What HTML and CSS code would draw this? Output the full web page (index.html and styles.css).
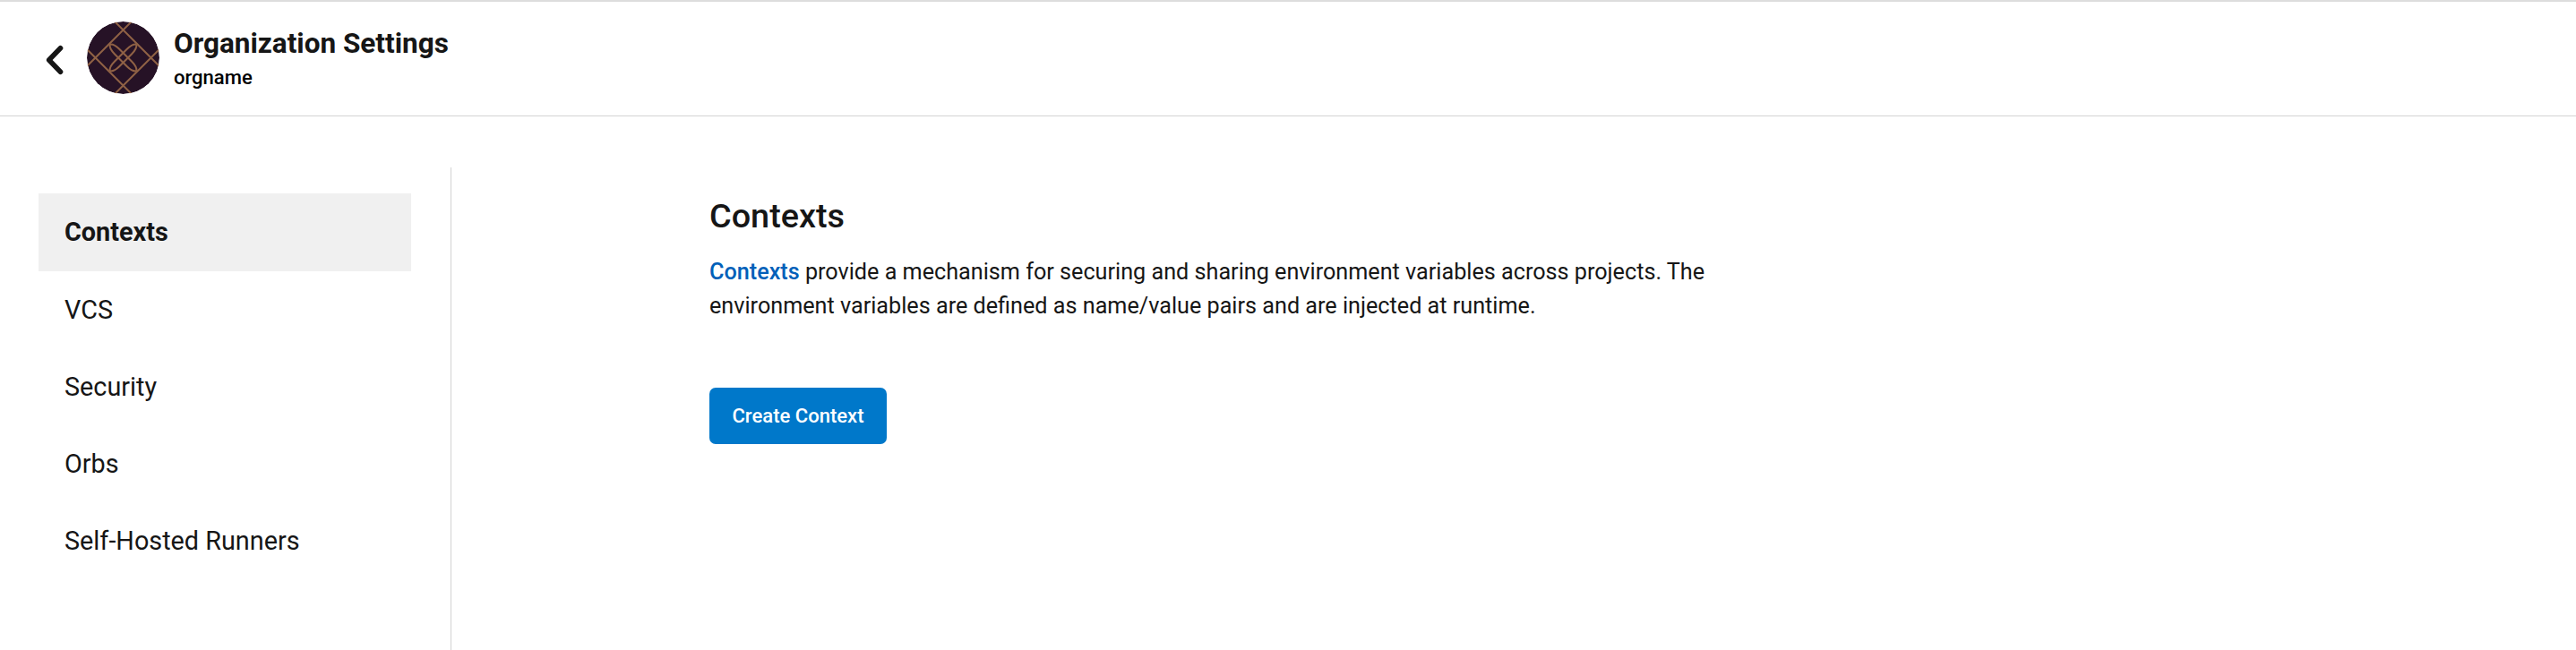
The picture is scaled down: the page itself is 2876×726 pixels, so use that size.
FILE: index.html
```html
<!DOCTYPE html>
<html lang="en">
<head>
<meta charset="utf-8">
<title>Organization Settings</title>
<link rel="stylesheet" href="styles.css">
</head>
<body>
<header class="header">
  <a class="back" href="#" aria-label="Back">
    <svg width="22" height="34" viewBox="0 0 22 34"><path d="M17.500 3.700L4.700 17L17.500 30.300" fill="none" stroke="#161616" stroke-width="5.600" stroke-linecap="round" stroke-linejoin="round"/></svg>
  </a>
  <svg class="avatar" viewBox="-120 -120 240 240">
    <defs>
      <clipPath id="disc"><circle r="120"/></clipPath>
      <g id="loop">
        <path d="M-44 -44C-32 -46 -22 -38 -12 -28L28 12C38 22 46 32 44 44"/>
        <path d="M-44 -44C-46 -32 -38 -22 -28 -12L12 28C22 38 32 46 44 44"/>
      </g>
    </defs>
    <g clip-path="url(#disc)">
      <circle r="120" fill="#261226"/>
      <g fill="none" stroke="#8f6145" stroke-width="6">
        <path d="M-32 -124L124 32M32 -124L-124 32M-124 -32L32 124M124 -32L-32 124"/>
        <use href="#loop"/>
        <use href="#loop" transform="rotate(90)"/>
      </g>
    </g>
  </svg>
  <div class="titles">
    <h1 class="title">Organization Settings</h1>
    <div class="org">orgname</div>
  </div>
</header>
<div class="body">
  <nav class="sidebar">
    <a class="item active" href="#">Contexts</a>
    <a class="item" href="#">VCS</a>
    <a class="item" href="#">Security</a>
    <a class="item" href="#">Orbs</a>
    <a class="item" href="#">Self-Hosted Runners</a>
  </nav>
  <main class="main">
    <h2 class="heading">Contexts</h2>
    <p class="text"><a class="link" href="#">Contexts</a> provide a mechanism for securing and sharing environment variables across projects. The<br>environment variables are defined as name/value pairs and are injected at runtime.</p>
    <button class="button" type="button">Create Context</button>
  </main>
</div>
</body>
</html>
```
FILE: styles.css
```css
* { box-sizing: border-box; }
body {
  margin: 0;
  height: 726px;
  display: flex;
  flex-direction: column;
  overflow: hidden;
  background: #fff;
  color: #161616;
  font-family: Roboto, "Liberation Sans", sans-serif;
}
a { color: inherit; text-decoration: none; }
.header {
  height: 130px;
  flex: none;
  display: flex;
  align-items: flex-start;
  padding-left: 50px;
  border-top: 2px solid #ddd;
  border-bottom: 1px solid #d3d3d3;
}
.back { display: block; width: 22px; height: 34px; margin: 48px 25px 0 0; }
.back svg { display: block; }
.avatar { display: block; width: 81px; height: 81px; margin-top: 22px; }
.titles { margin: 27px 0 0 16px; }
.title { margin: 0; font-size: 31.5px; line-height: 40px; font-weight: 700; }
.org { margin-top: 4px; font-size: 22.05px; line-height: 28px; font-weight: 500; color: #000; }
.body { flex: 1; display: flex; padding-top: 57px; }
.sidebar {
  width: 504px;
  padding: 29.4px 44px 0 43px;
  border-right: 1px solid #d3d3d3;
}
.item {
  display: block;
  height: 86.2px;
  padding-left: 29px;
  font-size: 28.8px;
  line-height: 86px;
}
.active { background: #f0f0f0; font-weight: 700; }
.main { padding: 30px 0 0 288px; }
.heading { margin: 0; font-size: 37.8px; line-height: 48px; font-weight: 500; }
.text { margin: 20px 0 0; font-size: 25.2px; line-height: 38px; white-space: nowrap; }
.link { color: #0060b9; font-weight: 500; }
.button {
  display: block;
  width: 198px;
  height: 63px;
  margin-top: 72px;
  padding: 0;
  border: 0;
  border-radius: 7px;
  background: #0078ca;
  color: #fff;
  font: 500 22.05px Roboto, "Liberation Sans", sans-serif;
}
```
